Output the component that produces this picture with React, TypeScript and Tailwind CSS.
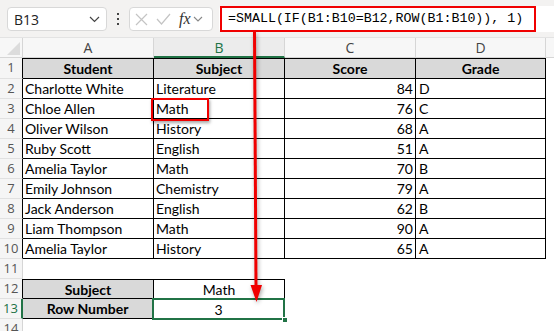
import React from 'react';

type Row = { n: number; a: string; b: string; c: string; d: string };

const rows: Row[] = [
  { n: 2, a: 'Charlotte White', b: 'Literature', c: '84', d: 'D' },
  { n: 3, a: 'Chloe Allen', b: 'Math', c: '76', d: 'C' },
  { n: 4, a: 'Oliver Wilson', b: 'History', c: '68', d: 'A' },
  { n: 5, a: 'Ruby Scott', b: 'English', c: '51', d: 'A' },
  { n: 6, a: 'Amelia Taylor', b: 'Math', c: '70', d: 'B' },
  { n: 7, a: 'Emily Johnson', b: 'Chemistry', c: '79', d: 'A' },
  { n: 8, a: 'Jack Anderson', b: 'English', c: '62', d: 'B' },
  { n: 9, a: 'Liam Thompson', b: 'Math', c: '90', d: 'A' },
  { n: 10, a: 'Amelia Taylor', b: 'History', c: '65', d: 'A' },
];

const UI = "font-['Open_Sans',sans-serif]";
const CELL = "font-['Lato',sans-serif] text-[14px] text-black";

function RowHead({ n, edge }: { n: number; edge: string }) {
  return (
    <div className={`w-[23px] shrink-0 flex items-center justify-center bg-[#f5f5f5] border-b border-[#e1e1e1] text-[13px] text-[#555] ${UI} ${edge}`}>
      {n}
    </div>
  );
}

function TopBar() {
  return (
    <div className="h-[37px] bg-[#f3f2f1] flex items-start pt-[7px] pl-[7px]">
      <div className={`w-[100px] h-[24px] bg-white border border-[#d8d8d8] rounded-[4px] flex items-center justify-between pl-[6px] pr-[6px] text-[14px] text-[#222] ${UI}`}>
        <span>B13</span>
        <svg width="11" height="7" viewBox="0 0 11 7"><path d="M1 1l4.5 4.5L10 1" fill="none" stroke="#444" strokeWidth="1.2" /></svg>
      </div>
      <div className="w-[22px] h-[24px] flex flex-col items-center justify-center gap-[3px]">
        <span className="w-[2px] h-[2px] bg-[#444]" />
        <span className="w-[2px] h-[2px] bg-[#444]" />
        <span className="w-[2px] h-[2px] bg-[#444]" />
      </div>
      <div className="w-[84px] h-[24px] bg-white border border-[#d8d8d8] rounded-[4px] flex items-center pl-[5px] gap-[8px]">
        <svg width="13" height="13" viewBox="0 0 13 13"><path d="M1 1l11 11M12 1L1 12" stroke="#c4c4c4" strokeWidth="1.2" /></svg>
        <svg width="15" height="12" viewBox="0 0 15 12"><path d="M1 6l4.5 5L14 1" fill="none" stroke="#c4c4c4" strokeWidth="1.2" /></svg>
        <span className="flex items-center gap-[2px]">
          <span className="font-['Liberation_Serif',serif] italic text-[16px] text-[#333] leading-none">fx</span>
          <svg width="10" height="6" viewBox="0 0 10 6"><path d="M1 1l4 4 4-4" fill="none" stroke="#888" strokeWidth="1.1" /></svg>
        </span>
      </div>
      <div className="ml-[6px] flex-1 h-[26px] -mt-[1px] bg-white rounded-l-[4px] flex items-center pl-[1px]">
        <div className="w-[316px] h-[26px] border-[2.5px] border-[#f00000] flex items-center pl-[6px] font-['Liberation_Mono',monospace] text-[13.3px] text-black whitespace-nowrap">
          =SMALL(IF(B1:B10=B12,ROW(B1:B10)), 1)
        </div>
      </div>
    </div>
  );
}

function ColHeader() {
  const col = `flex items-center justify-center text-[14px] text-[#444] ${UI}`;
  return (
    <div className="h-[21px] flex bg-[#f7f7f7] border-t border-[#e3e3e3]">
      <div className="w-[23px] border-r border-b border-[#d6d6d6] relative">
        <svg className="absolute right-[2px] bottom-[2px]" width="13" height="13" viewBox="0 0 13 13"><path d="M13 0V13H0z" fill="#dcdcdc" /></svg>
      </div>
      <div className={`w-[131px] border-r border-b border-[#d6d6d6] ${col}`}>A</div>
      <div className={`w-[131px] border-r border-b-2 border-r-[#d6d6d6] border-b-[#217346] bg-[#ececec] ${col} text-[#217346]`}>B</div>
      <div className={`w-[131px] border-r border-b border-[#d6d6d6] ${col}`}>C</div>
      <div className={`w-[130px] border-r border-b border-[#d6d6d6] ${col}`}>D</div>
      <div className="flex-1 border-b border-[#d6d6d6]" />
    </div>
  );
}

export default function App() {
  const hd = `flex items-center justify-center bg-[#d9d9d9] font-bold ${CELL}`;
  return (
    <div className="w-[554px] h-[331px] overflow-hidden bg-white relative">
      <TopBar />
      <ColHeader />

      {/* row 1 */}
      <div className="h-[21px] flex">
        <RowHead n={1} edge="border-r border-r-black" />
        <div className={`w-[131px] border-r border-y border-black ${hd}`}>Student</div>
        <div className={`w-[131px] border-r border-y border-black ${hd}`}>Subject</div>
        <div className={`w-[131px] border-r border-y border-black ${hd}`}>Score</div>
        <div className={`w-[130px] border-r border-y border-black ${hd}`}>Grade</div>
      </div>

      {rows.map((r) => (
        <div key={r.n} className="h-[20px] flex">
          <RowHead n={r.n} edge="border-r border-r-black" />
          <div className={`w-[131px] border-r border-b border-black pl-[2px] flex items-center ${CELL}`}>{r.a}</div>
          <div className={`w-[131px] border-r border-b border-black pl-[2px] flex items-center relative ${CELL}`}>
            {r.b}
            {r.n === 3 && (
              <div className="absolute -left-[3px] -top-[1px] w-[58px] h-[23px] border-2 border-[#f00000] shadow-[1px_2px_3px_rgba(0,0,0,0.35)]" />
            )}
          </div>
          <div className={`w-[131px] border-r border-b border-black pr-[2px] flex items-center justify-end ${CELL}`}>{r.c}</div>
          <div className={`w-[130px] border-r border-b border-black pl-[3px] flex items-center ${CELL}`}>{r.d}</div>
        </div>
      ))}

      {/* row 11 */}
      <div className="h-[20px] flex">
        <RowHead n={11} edge="border-r border-r-[#d6d6d6]" />
      </div>

      {/* row 12 */}
      <div className="h-[20px] flex">
        <RowHead n={12} edge="border-r border-r-black" />
        <div className={`w-[131px] border-r border-y border-black ${hd}`}>Subject</div>
        <div className={`w-[131px] border-r border-y border-black flex items-center justify-center ${CELL}`}>Math</div>
      </div>

      {/* row 13 */}
      <div className="h-[20px] flex">
        <RowHead n={13} edge="border-r-2 border-r-[#217346] !text-[#217346] bg-[#ececec]" />
        <div className={`w-[130px] border-r border-b border-black ${hd}`}>Row Number</div>
        <div className={`w-[131px] flex items-center justify-center relative ${CELL}`}>
          3
          <div className="absolute -left-[1px] -top-[1px] w-[133px] h-[22px] border-2 border-[#217346]" />
          <div className="absolute -right-[4px] -bottom-[4px] w-[6px] h-[6px] bg-[#217346] border border-white" />
        </div>
      </div>

      {/* row 14 */}
      <div className="h-[20px] flex">
        <RowHead n={14} edge="border-r border-r-[#d6d6d6]" />
      </div>

      {/* red arrow from the formula bar to B13 */}
      <svg className="absolute left-[244px] top-[31px] drop-shadow-[1px_2px_2px_rgba(0,0,0,0.35)]" width="24" height="275" viewBox="0 0 24 275">
        <path d="M10.5 0L12 256" stroke="#f00000" strokeWidth="3" />
        <path d="M6.5 254L18 254L12.5 271z" fill="#f00000" />
      </svg>
    </div>
  );
}
